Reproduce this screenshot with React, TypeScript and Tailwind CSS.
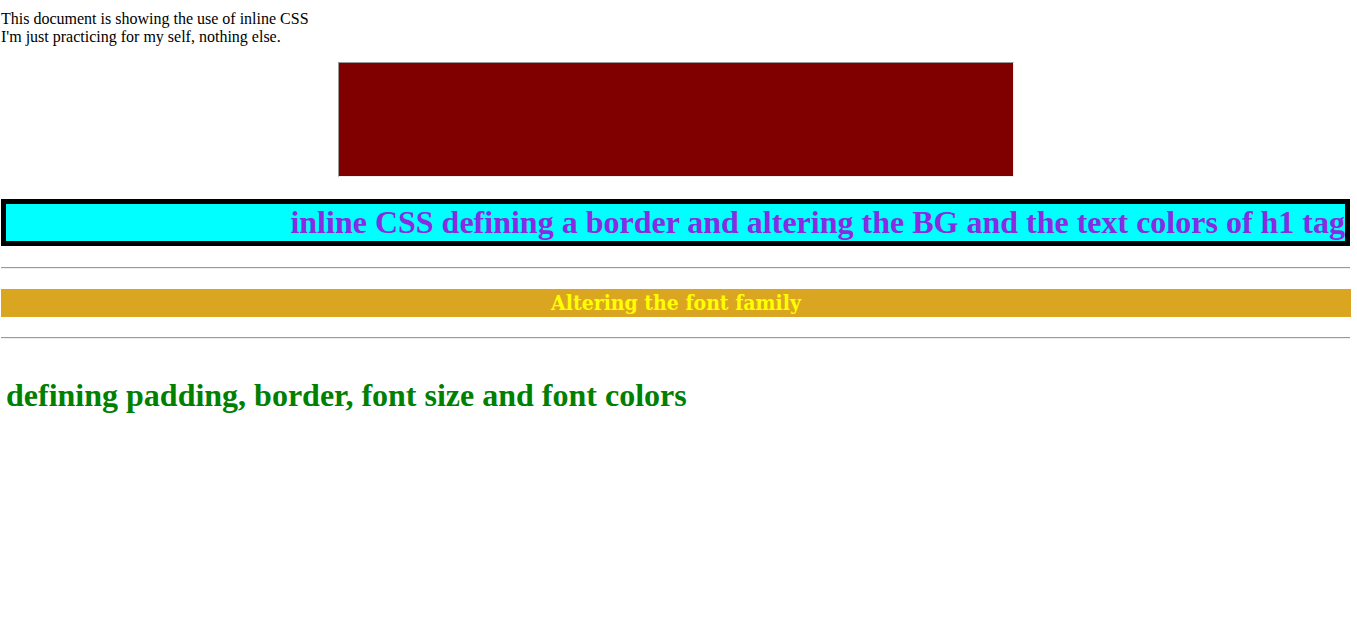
export default function App() {
  return (
    <div className="min-h-screen bg-white pt-[10px] pl-[1px] pr-[6px] font-['Liberation_Serif','Times_New_Roman',serif] text-black">
      <p className="text-[16px] leading-[18.4px]">
        This document is showing the use of inline CSS
        <br />
        I'm just practicing for my self, nothing else.
      </p>

      <div className="mx-auto mt-[15px] h-[115px] w-[676px] border border-t-[#9a9a9a] border-l-[#9a9a9a] border-r-[#eeeeee] border-b-[#eeeeee] bg-[#800000]" />

      <h1 className="mr-[1px] mt-[22px] border-[5px] border-black bg-[#00ffff] text-right text-[32px] font-bold leading-[37px] text-[#8a2be2]">
        inline CSS defining a border and altering the BG and the text colors of h1 tag
      </h1>

      <hr className="mr-[1px] mt-[21px] border-t border-b border-t-[#9a9a9a] border-b-[#eeeeee]" />

      <p className="mt-[20px] bg-[#daa520] text-center font-['DejaVu_Serif_Condensed','DejaVu_Serif',serif] text-[21px] font-bold leading-[28px] text-[#ffff00]">
        Altering the font family
      </p>

      <hr className="mr-[1px] mt-[20px] border-t border-b border-t-[#9a9a9a] border-b-[#eeeeee]" />

      <h2 className="mt-[38px] pl-[5px] text-[32px] font-bold leading-[37px] text-[#008000]">
        defining padding, border, font size and font colors
      </h2>
    </div>
  )
}
